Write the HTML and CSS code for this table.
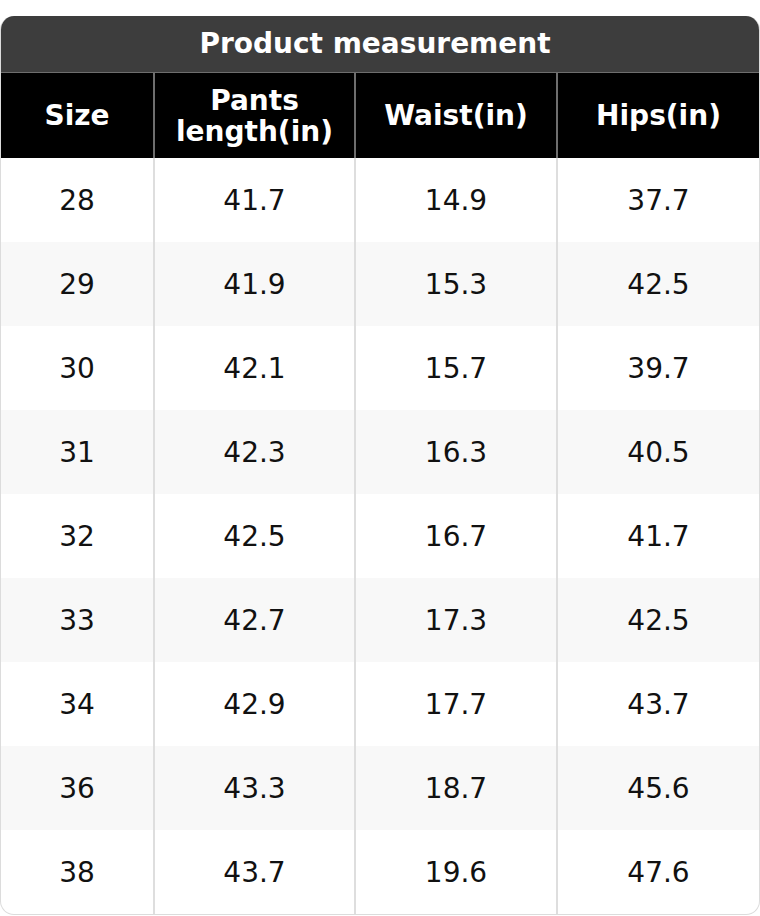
FILE: index.html
```html
<!DOCTYPE html>
<html>
<head>
<meta charset="utf-8">
<link rel="stylesheet" href="styles.css">
</head>
<body>
<div class="card">
  <div class="title">Product measurement</div>
  <table class="sizes">
    <colgroup>
      <col class="c1"><col class="c2"><col class="c3"><col class="c4">
    </colgroup>
    <thead>
      <tr><th>Size</th><th>Pants<br>length(in)</th><th>Waist(in)</th><th>Hips(in)</th></tr>
    </thead>
    <tbody>
      <tr><td>28</td><td>41.7</td><td>14.9</td><td>37.7</td></tr>
      <tr><td>29</td><td>41.9</td><td>15.3</td><td>42.5</td></tr>
      <tr><td>30</td><td>42.1</td><td>15.7</td><td>39.7</td></tr>
      <tr><td>31</td><td>42.3</td><td>16.3</td><td>40.5</td></tr>
      <tr><td>32</td><td>42.5</td><td>16.7</td><td>41.7</td></tr>
      <tr><td>33</td><td>42.7</td><td>17.3</td><td>42.5</td></tr>
      <tr><td>34</td><td>42.9</td><td>17.7</td><td>43.7</td></tr>
      <tr><td>36</td><td>43.3</td><td>18.7</td><td>45.6</td></tr>
      <tr><td>38</td><td>43.7</td><td>19.6</td><td>47.6</td></tr>
    </tbody>
  </table>
</div>
</body>
</html>
```
FILE: styles.css
```css
html, body {
  margin: 0;
  padding: 0;
  background: #ffffff;
}
body {
  padding-top: 16px;
  font-family: "DejaVu Sans", "Liberation Sans", sans-serif;
}
.card {
  width: 760px;
  box-sizing: border-box;
  border: 1px solid #dcdcdc;
  border-top: none;
  border-radius: 14px;
  overflow: hidden;
}
.title {
  background: #3d3d3d;
  color: #ffffff;
  font-weight: bold;
  font-size: 28px;
  height: 56px;
  line-height: 56px;
  padding-right: 10px;
  text-align: center;
  border-bottom: 1px solid #6e6e6e;
}
.sizes {
  width: 100%;
  border-collapse: collapse;
  table-layout: fixed;
}
.c1 { width: 153px; }
.c2 { width: 201px; }
.c3 { width: 202px; }
.c4 { width: auto; }
.sizes th {
  background: #000000;
  color: #ffffff;
  font-weight: bold;
  font-size: 28px;
  line-height: 31px;
  height: 85px;
  padding: 0;
  text-align: center;
  vertical-align: middle;
  border-left: 2px solid #6e6e6e;
}
.sizes th:first-child,
.sizes td:first-child {
  border-left: none;
}
.sizes td {
  height: 84px;
  padding: 0;
  font-size: 28px;
  color: #111111;
  text-align: center;
  vertical-align: middle;
  border-left: 2px solid #dedede;
}
.sizes tbody tr:nth-child(even) td {
  background: #f8f8f8;
}
```
